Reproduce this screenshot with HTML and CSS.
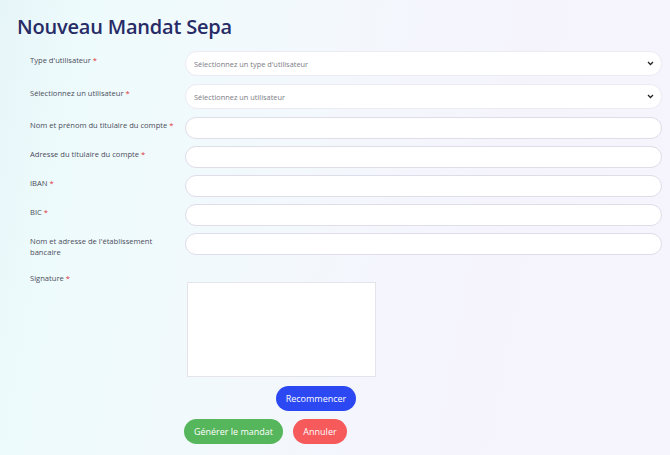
FILE: index.html
```html
<!DOCTYPE html>
<html>
<head>
<meta charset="utf-8"/>
<title>Nouveau Mandat Sepa</title>
<link rel="stylesheet" href="styles.css">
</head>
<body>
<main class="page">
<h1 class="title">Nouveau Mandat Sepa</h1>
<form class="mandate-form">
	<div class="row row-select">
		<label for="user_type">Type d'utilisateur <span class="req">*</span></label>
		<div class="select-wrap">
			<select id="user_type" class="field">
				<option>Sélectionnez un type d'utilisateur</option>
			</select>
			<svg class="chevron" viewBox="0 0 8 6" width="7" height="5"><path d="M1 1.2 L4 4.2 L7 1.2" fill="none" stroke="#222" stroke-width="1.5"/></svg>
		</div>
	</div>
	<div class="row row-select">
		<label for="user">Sélectionnez un utilisateur <span class="req">*</span></label>
		<div class="select-wrap">
			<select id="user" class="field">
				<option>Sélectionnez un utilisateur</option>
			</select>
			<svg class="chevron" viewBox="0 0 8 6" width="7" height="5"><path d="M1 1.2 L4 4.2 L7 1.2" fill="none" stroke="#222" stroke-width="1.5"/></svg>
		</div>
	</div>
	<div class="row row-first">
		<label for="holder_name">Nom et prénom du titulaire du compte <span class="req">*</span></label>
		<input id="holder_name" class="field" type="text"/>
	</div>
	<div class="row">
		<label for="holder_address">Adresse du titulaire du compte <span class="req">*</span></label>
		<input id="holder_address" class="field" type="text"/>
	</div>
	<div class="row">
		<label for="iban">IBAN <span class="req">*</span></label>
		<input id="iban" class="field" type="text"/>
	</div>
	<div class="row">
		<label for="bic">BIC <span class="req">*</span></label>
		<input id="bic" class="field" type="text"/>
	</div>
	<div class="row">
		<label for="bank" class="label-wrap">Nom et adresse de l'établissement bancaire</label>
		<input id="bank" class="field" type="text"/>
	</div>
	<div class="row row-signature">
		<label>Signature <span class="req">*</span></label>
		<div class="signature-block">
			<div class="signature-pad"></div>
			<button type="button" class="btn btn-blue btn-reset">Recommencer</button>
		</div>
	</div>
	<div class="row row-actions">
		<span></span>
		<div class="actions">
			<button type="button" class="btn btn-green">Générer le mandat</button>
			<button type="button" class="btn btn-red">Annuler</button>
		</div>
	</div>
</form>
</main>
</body>
</html>
```

FILE: styles.css
```css
html, body {
	margin: 0;
	height: 100%;
}
body {
	font-family: "Open Sans", "Liberation Sans", sans-serif;
	background: linear-gradient(100deg, #e6f5f8 0%, #eefbfd 12%, #f3f8fc 45%, #f5f4fd 70%, #f6f5fd 100%);
	color: #4b4d5a;
}
.page {
	padding: 13px 8px 0 17px;
}
.title {
	margin: 0 0 10px 0;
	font-size: 20px;
	font-weight: 600;
	line-height: 28px;
	color: #272b66;
	letter-spacing: -0.2px;
}
.mandate-form {
	padding-left: 13px;
}
.row {
	display: grid;
	grid-template-columns: 155px 1fr;
	margin-bottom: 7px;
}
.row label {
	font-size: 7.6px;
	line-height: 11px;
	padding-top: 3px;
	padding-right: 2px;
	color: #4b4d5a;
}
.row .label-wrap {
	padding-right: 30px;
}
.row-select {
	margin-bottom: 8px;
}
.row-select label {
	padding-top: 4px;
}
.row-first {
	margin-top: 5px;
}
.req {
	color: #e0313a;
}
.field {
	display: block;
	box-sizing: border-box;
	width: 100%;
	height: 22px;
	border: 1px solid #dfdde9;
	border-radius: 11px;
	background: #fff;
	font-family: inherit;
	font-size: 7.4px;
	color: #7b7d86;
	padding: 0 8px;
	outline: none;
}
select.field {
	height: 25px;
	border-radius: 12px;
	border-color: #eceaf3;
	appearance: none;
	-webkit-appearance: none;
}
.select-wrap {
	position: relative;
}
.chevron {
	position: absolute;
	right: 8px;
	top: 10px;
}
.row-signature label {
	padding-top: 8px;
}
.signature-block {
	padding-top: 17px;
}
.signature-pad {
	width: 189px;
	height: 95px;
	margin-left: 2px;
	background: #fff;
	border: 1px solid #e4e4ea;
	box-sizing: border-box;
}
.btn {
	height: 25px;
	border: none;
	border-radius: 13px;
	font-family: inherit;
	font-size: 9px;
	font-weight: 500;
	color: #fff;
	padding: 0;
}
.btn-reset {
	display: block;
	margin: 9px 0 0 91px;
	width: 80px;
}
.btn-blue {
	background: #2b48f2;
}
.btn-green {
	background: #56b65b;
	width: 99px;
}
.btn-red {
	background: #f65a5b;
	width: 54px;
}
.row-actions {
	margin-top: 8px;
}
.actions {
	display: flex;
	gap: 10px;
	margin-left: -1px;
}
```
